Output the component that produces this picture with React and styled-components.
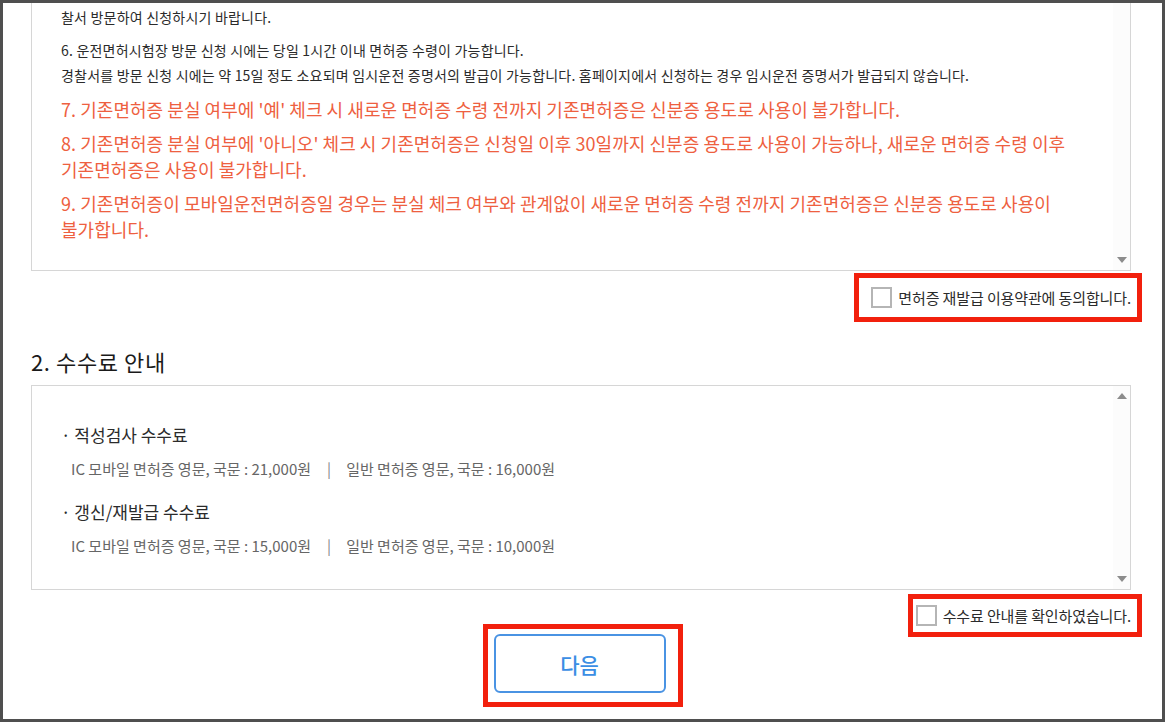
import React from "react";
import styled, { createGlobalStyle } from "styled-components";

const GlobalStyle = createGlobalStyle`
  html, body {
    margin: 0;
    padding: 0;
    background: #fff;
  }
  body {
    font-family: "Noto Sans CJK KR", "Noto Sans", sans-serif;
    color: #333;
  }
  * {
    box-sizing: border-box;
  }
`;

const terms = [
  { red: false, lines: ["찰서 방문하여 신청하시기 바랍니다."] },
  {
    red: false,
    lines: [
      "6. 운전면허시험장 방문 신청 시에는 당일 1시간 이내 면허증 수령이 가능합니다.",
      "경찰서를 방문 신청 시에는 약 15일 정도 소요되며 임시운전 증명서의 발급이 가능합니다. 홈페이지에서 신청하는 경우 임시운전 증명서가 발급되지 않습니다.",
    ],
  },
  {
    red: true,
    lines: ["7. 기존면허증 분실 여부에 '예' 체크 시 새로운 면허증 수령 전까지 기존면허증은 신분증 용도로 사용이 불가합니다."],
  },
  {
    red: true,
    lines: [
      "8. 기존면허증 분실 여부에 '아니오' 체크 시 기존면허증은 신청일 이후 30일까지 신분증 용도로 사용이 가능하나, 새로운 면허증 수령 이후",
      "기존면허증은 사용이 불가합니다.",
    ],
  },
  {
    red: true,
    lines: [
      "9. 기존면허증이 모바일운전면허증일 경우는 분실 체크 여부와 관계없이 새로운 면허증 수령 전까지 기존면허증은 신분증 용도로 사용이",
      "불가합니다.",
    ],
  },
];

const fees = [
  {
    title: "적성검사 수수료",
    items: ["IC 모바일 면허증 영문, 국문 : 21,000원", "일반 면허증 영문, 국문 : 16,000원"],
  },
  {
    title: "갱신/재발급 수수료",
    items: ["IC 모바일 면허증 영문, 국문 : 15,000원", "일반 면허증 영문, 국문 : 10,000원"],
  },
];

function Arrow({ up }) {
  return (
    <svg width="10" height="6" viewBox="0 0 10 6">
      <path d={up ? "M0 6 L5 0 L10 6 Z" : "M0 0 L10 0 L5 6 Z"} fill="#8c8c8c" />
    </svg>
  );
}

function App() {
  return (
    <>
      <GlobalStyle />
      <Frame>
        <ScrollBox $cut height={268}>
          <TermsContent>
            {terms.map((p, i) => (
              <Para key={i} $red={p.red}>
                {p.lines.map((l, j) => (
                  <Line key={j}>{l}</Line>
                ))}
              </Para>
            ))}
          </TermsContent>
          <ScrollTrack>
            <span />
            <Arrow />
          </ScrollTrack>
        </ScrollBox>

        <AgreeRow $mt={2}>
          <Marked $wide>
            <Check type="checkbox" />
            <AgreeText>면허증 재발급 이용약관에 동의합니다.</AgreeText>
          </Marked>
        </AgreeRow>

        <Heading>2. 수수료 안내</Heading>

        <ScrollBox height={205} $mt={9}>
          <FeeContent>
            {fees.map((f) => (
              <FeeGroup key={f.title}>
                <FeeTitle>· {f.title}</FeeTitle>
                <FeeDetail>
                  {f.items[0]}
                  <Sep>|</Sep>
                  {f.items[1]}
                </FeeDetail>
              </FeeGroup>
            ))}
          </FeeContent>
          <ScrollTrack $top>
            <Arrow up />
            <Arrow />
          </ScrollTrack>
        </ScrollBox>

        <AgreeRow $mt={4}>
          <Marked>
            <Check type="checkbox" />
            <AgreeText>수수료 안내를 확인하였습니다.</AgreeText>
          </Marked>
        </AgreeRow>

        <ButtonRow>
          <ButtonMark>
            <NextButton type="button">다음</NextButton>
          </ButtonMark>
        </ButtonRow>
      </Frame>
    </>
  );
}

const Frame = styled.div`
  width: 1165px;
  height: 722px;
  border: 3px solid #4f4f4f;
  background: #fff;
  overflow: hidden;
  padding: 0 31px 0 28px;
  display: flex;
  flex-direction: column;
`;

const ScrollBox = styled.div`
  display: flex;
  flex: none;
  height: ${(p) => p.height}px;
  margin-top: ${(p) => p.$mt || 0}px;
  border: 1px solid #d6d6d6;
  border-top: ${(p) => (p.$cut ? "none" : "1px solid #d6d6d6")};
`;

const TermsContent = styled.div`
  flex: 1;
  padding: 2px 0 0 29px;
`;

const ScrollTrack = styled.div`
  width: 17px;
  flex: none;
  background: #fcfcfc;
  display: flex;
  flex-direction: column;
  justify-content: space-between;
  align-items: center;
  padding: ${(p) => (p.$top ? "7px" : "0")} 0 7px;
  svg {
    display: block;
  }
`;

const Para = styled.div`
  margin-bottom: 8px;
  font-size: ${(p) => (p.$red ? "18px" : "14px")};
  line-height: ${(p) => (p.$red ? "26px" : "25px")};
  letter-spacing: ${(p) => (p.$red ? "0.05px" : "0.2px")};
  color: ${(p) => (p.$red ? "#ee6040" : "#2b2b2b")};
  white-space: nowrap;
`;

const Line = styled.div``;

const AgreeRow = styled.div`
  display: flex;
  justify-content: flex-end;
  margin-top: ${(p) => p.$mt}px;
  margin-right: -11px;
  flex: none;
`;

const Marked = styled.label`
  display: flex;
  align-items: center;
  height: ${(p) => (p.$wide ? 49 : 43)}px;
  padding: 0 6px 0 ${(p) => (p.$wide ? 12 : 3)}px;
  border: 5px solid #f2200d;
`;

const Check = styled.input`
  appearance: none;
  margin: 0 6px 0 0;
  width: 21px;
  height: 21px;
  border: 2px solid #b5b5b5;
  background: #fff;
  flex: none;
`;

const AgreeText = styled.span`
  font-size: 15px;
  letter-spacing: -0.12px;
  color: #2b2b2b;
  white-space: nowrap;
`;

const Heading = styled.h2`
  margin: 24px 0 0;
  font-size: 22px;
  line-height: 30px;
  font-weight: 400;
  color: #1a1a1a;
  letter-spacing: 0.6px;
  flex: none;
`;

const FeeContent = styled.div`
  flex: 1;
  padding: 37px 0 0 29px;
  & > div:first-child {
    margin-top: 0;
  }
`;

const FeeGroup = styled.div`
  margin-top: 20px;
`;

const FeeTitle = styled.div`
  font-size: 17px;
  line-height: 24px;
  color: #2b2b2b;
`;

const FeeDetail = styled.div`
  margin-top: 11px;
  padding-left: 10px;
  font-size: 15px;
  line-height: 22px;
  color: #666;
  white-space: nowrap;
`;

const Sep = styled.span`
  margin: 0 15px 0 16px;
  color: #888;
`;

const ButtonRow = styled.div`
  display: flex;
  justify-content: center;
  margin-top: -13px;
  padding-left: 3px;
  flex: none;
`;

const ButtonMark = styled.div`
  border: 5px solid #f2200d;
  padding: 5px 12px 9px 6px;
`;

const NextButton = styled.button`
  display: block;
  width: 172px;
  height: 59px;
  border: 2px solid #4a93e3;
  border-radius: 6px;
  background: #fff;
  color: #3b8ee4;
  font-family: "Noto Sans CJK KR", "Noto Sans", sans-serif;
  font-size: 21px;
  font-weight: 500;
  cursor: pointer;
`;

export default App;
